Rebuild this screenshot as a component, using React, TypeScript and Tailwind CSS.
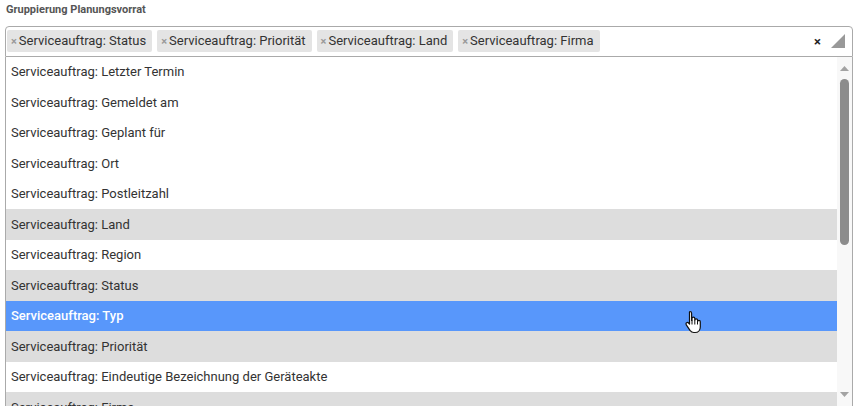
import React from 'react';

const tags = ['Status', 'Priorität', 'Land', 'Firma'];

const options = [
  { label: 'Letzter Termin', state: 'plain' },
  { label: 'Gemeldet am', state: 'plain' },
  { label: 'Geplant für', state: 'plain' },
  { label: 'Ort', state: 'plain' },
  { label: 'Postleitzahl', state: 'plain' },
  { label: 'Land', state: 'selected' },
  { label: 'Region', state: 'plain' },
  { label: 'Status', state: 'selected' },
  { label: 'Typ', state: 'active' },
  { label: 'Priorität', state: 'selected' },
  { label: 'Eindeutige Bezeichnung der Geräteakte', state: 'plain' },
  { label: 'Firma', state: 'selected' },
];

const rowClass: Record<string, string> = {
  plain: 'bg-white text-[#333]',
  selected: 'bg-[#dddddd] text-[#333]',
  active: 'bg-[#5897fb] text-white font-medium',
};

const HandCursor: React.FC = () => (
  <svg width="20" height="24" viewBox="0 0 20 24" className="absolute left-[684px] top-[310px]">
    <path
      d="M6 1.5c1 0 1.6.7 1.6 1.7v7.3l.4-.1V8.6c0-.9.6-1.4 1.4-1.4s1.4.6 1.4 1.4v1.6c0-.8.6-1.3 1.4-1.3s1.4.6 1.4 1.4v1.1c.1-.7.6-1.1 1.3-1.1.8 0 1.4.6 1.4 1.4v5.2c0 3-2 5.6-5.2 5.6H9.8c-1.7 0-2.8-.8-3.8-2.1L2.3 14.8c-.5-.7-.4-1.6.3-2.1.7-.5 1.5-.3 2 .3l.9 1.1V3.2C5.5 2.2 5.3 1.5 6 1.5z"
      fill="#fff"
      stroke="#111"
      strokeWidth="1.2"
      strokeLinejoin="round"
    />
    <path d="M8 10.5v4M10.8 10.2v4.3M13.5 11v3.5" stroke="#111" strokeWidth="1" />
  </svg>
);

export default function App() {
  return (
    <div className="relative w-[854px] h-[406px] overflow-hidden bg-white font-['Roboto',sans-serif]">
      <div className="pl-[6px] pt-[3px] h-[25.5px] text-[11px] font-bold text-[#555] leading-[14px]">
        Gruppierung Planungsvorrat
      </div>
      <div className="ml-[5px] w-[848px]">
        <div className="flex items-center h-[31px] border border-[#aaa] rounded-t-[4px] pl-[1px]">
          <div className="flex flex-1 items-center gap-[5px]">
            {tags.map(t => (
              <div
                key={t}
                className="flex items-center h-[22px] bg-[#e4e4e4] rounded-[2px] pl-[4px] pr-[6px] text-[13px] text-[#333]"
              >
                <span className="text-[#999] text-[11px] font-bold mr-[2px] leading-none">×</span>
                Serviceauftrag: {t}
              </div>
            ))}
          </div>
          <span className="text-[13px] font-bold text-[#222] mr-[10px] leading-none">×</span>
          <svg width="14" height="14" viewBox="0 0 14 14" className="mr-[7px]">
            <path d="M14 0 L14 14 L0 14 Z" fill="#999" />
          </svg>
        </div>
        <div className="flex h-[350px] border-x border-[#aaa]">
          <div className="flex-1 overflow-hidden">
            {options.map(o => (
              <div
                key={o.label}
                className={`h-[30.5px] flex items-center pl-[5px] text-[13px] ${rowClass[o.state]}`}
              >
                Serviceauftrag: {o.label}
              </div>
            ))}
          </div>
          <div className="w-[15px] bg-[#f8f8f8] flex flex-col items-center">
            <svg width="9" height="6" viewBox="0 0 9 6" className="mt-[9px]">
              <path d="M0 5 L4.5 0 L9 5 Z" fill="#a3a3a3" />
            </svg>
            <div className="mt-[7px] w-[9px] h-[166px] rounded-full bg-[#8c8c8c]" />
            <div className="flex-1" />
            <svg width="9" height="6" viewBox="0 0 9 6" className="mb-[9px]">
              <path d="M0 0 L9 0 L4.5 5 Z" fill="#a3a3a3" />
            </svg>
          </div>
        </div>
      </div>
      <HandCursor />
    </div>
  );
}
